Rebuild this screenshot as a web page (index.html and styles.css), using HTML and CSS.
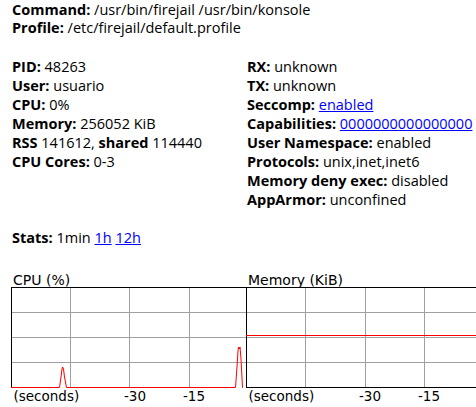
FILE: index.html
```html
<!DOCTYPE html>
<html>
<head>
<meta charset="utf-8">
<link rel="stylesheet" href="styles.css">
</head>
<body>
<div class="page">
  <div class="head">
    <div><b>Command:</b> /usr/bin/firejail /usr/bin/konsole</div>
    <div><b>Profile:</b> /etc/firejail/default.profile</div>
  </div>
  <div class="info">
    <div class="col">
      <div><b>PID:</b> 48263</div>
      <div><b>User:</b> usuario</div>
      <div><b>CPU:</b> 0%</div>
      <div><b>Memory:</b> 256052 KiB</div>
      <div><b>RSS</b> 141612, <b>shared</b> 114440</div>
      <div><b>CPU Cores:</b> 0-3</div>
    </div>
    <div class="col">
      <div><b>RX:</b> unknown</div>
      <div><b>TX:</b> unknown</div>
      <div><b>Seccomp:</b> <a href="#">enabled</a></div>
      <div><b>Capabilities:</b> <a href="#">0000000000000000 </a></div>
      <div><b>User Namespace:</b> enabled</div>
      <div><b>Protocols:</b> unix,inet,inet6</div>
      <div><b>Memory deny exec:</b> disabled</div>
      <div><b>AppArmor:</b> unconfined</div>
    </div>
  </div>
  <div class="stats"><b>Stats:</b> 1min <a href="#">1h</a> <a href="#">12h</a></div>
  <div class="charts">
    <div class="chart">
      <div class="title">CPU (%)</div>
      <svg class="plot" width="235" height="120" viewBox="0 0 235 120">
        <g stroke="#a0a0a4" stroke-width="1" fill="none">
          <line x1="0" y1="25.5" x2="235" y2="25.5"/>
          <line x1="0" y1="50.5" x2="235" y2="50.5"/>
          <line x1="0" y1="75.5" x2="235" y2="75.5"/>
          <line x1="59.5" y1="0" x2="59.5" y2="100"/>
          <line x1="118.5" y1="0" x2="118.5" y2="100"/>
          <line x1="178.5" y1="0" x2="178.5" y2="100"/>
        </g>
        <g stroke="#000" stroke-width="1" fill="none">
          <line x1="0" y1="0.5" x2="235" y2="0.5"/>
          <line x1="0.5" y1="0" x2="0.5" y2="101"/>
        </g>
        <polyline stroke="#ff0000" stroke-width="1" fill="none" points="0,100.5 48.5,100.5 50,90 51,82 51.5,80 52.5,82 53.5,90 55.5,100.5 224.5,100.5 226,80 227,64 227.5,60 228.5,62 229,60 230,72 231.5,100.5 232,100.5"/>
        <g class="axis">
          <text x="2.5" y="114">(seconds)</text>
          <text x="113" y="114">-30</text>
          <text x="172" y="114">-15</text>
        </g>
      </svg>
    </div>
    <div class="chart">
      <div class="title">Memory (KiB)</div>
      <svg class="plot" width="235" height="120" viewBox="0 0 235 120">
        <g stroke="#a0a0a4" stroke-width="1" fill="none">
          <line x1="0" y1="25.5" x2="235" y2="25.5"/>
          <line x1="0" y1="50.5" x2="235" y2="50.5"/>
          <line x1="0" y1="75.5" x2="235" y2="75.5"/>
          <line x1="59.5" y1="0" x2="59.5" y2="100"/>
          <line x1="119.5" y1="0" x2="119.5" y2="100"/>
          <line x1="178.5" y1="0" x2="178.5" y2="100"/>
        </g>
        <g stroke="#000" stroke-width="1" fill="none">
          <line x1="0" y1="0.5" x2="235" y2="0.5"/>
          <line x1="0.5" y1="0" x2="0.5" y2="101"/>
          <line x1="0" y1="100.5" x2="235" y2="100.5"/>
        </g>
        <line stroke="#ff0000" stroke-width="1" x1="0" y1="48.5" x2="235" y2="48.5"/>
        <g class="axis">
          <text x="2.5" y="114">(seconds)</text>
          <text x="113" y="114">-30</text>
          <text x="172" y="114">-15</text>
        </g>
      </svg>
    </div>
  </div>
</div>
</body>
</html>
```

FILE: styles.css
```css
html, body {
  margin: 0;
  padding: 0;
  background: #fff;
  overflow: hidden;
}
.page {
  width: 476px;
  height: 407px;
  padding: 1px 0 0 12px;
  box-sizing: border-box;
  font-family: "Open Sans", "DejaVu Sans", sans-serif;
  font-size: 14.5px;
  color: #000;
  white-space: nowrap;
}
b {
  font-weight: 700;
}
a {
  color: #0000ff;
  text-decoration: underline;
}
.head {
  line-height: 18px;
}
.info {
  display: grid;
  grid-template-columns: 235px 1fr;
  margin-top: 20px;
  line-height: 19px;
}
.stats {
  margin-top: 19px;
  line-height: 19px;
}
.charts {
  display: flex;
  margin-top: 26px;
  margin-left: -1px;
}
.chart {
  flex: 0 0 235px;
  display: flex;
  flex-direction: column;
}
.title {
  font-family: "DejaVu Sans", sans-serif;
  font-size: 14px;
  line-height: 14px;
  height: 14px;
  padding-left: 2px;
}
.plot {
  display: block;
  overflow: visible;
}
.axis text {
  font-family: "DejaVu Sans", sans-serif;
  font-size: 13.5px;
  fill: #000;
}
```
